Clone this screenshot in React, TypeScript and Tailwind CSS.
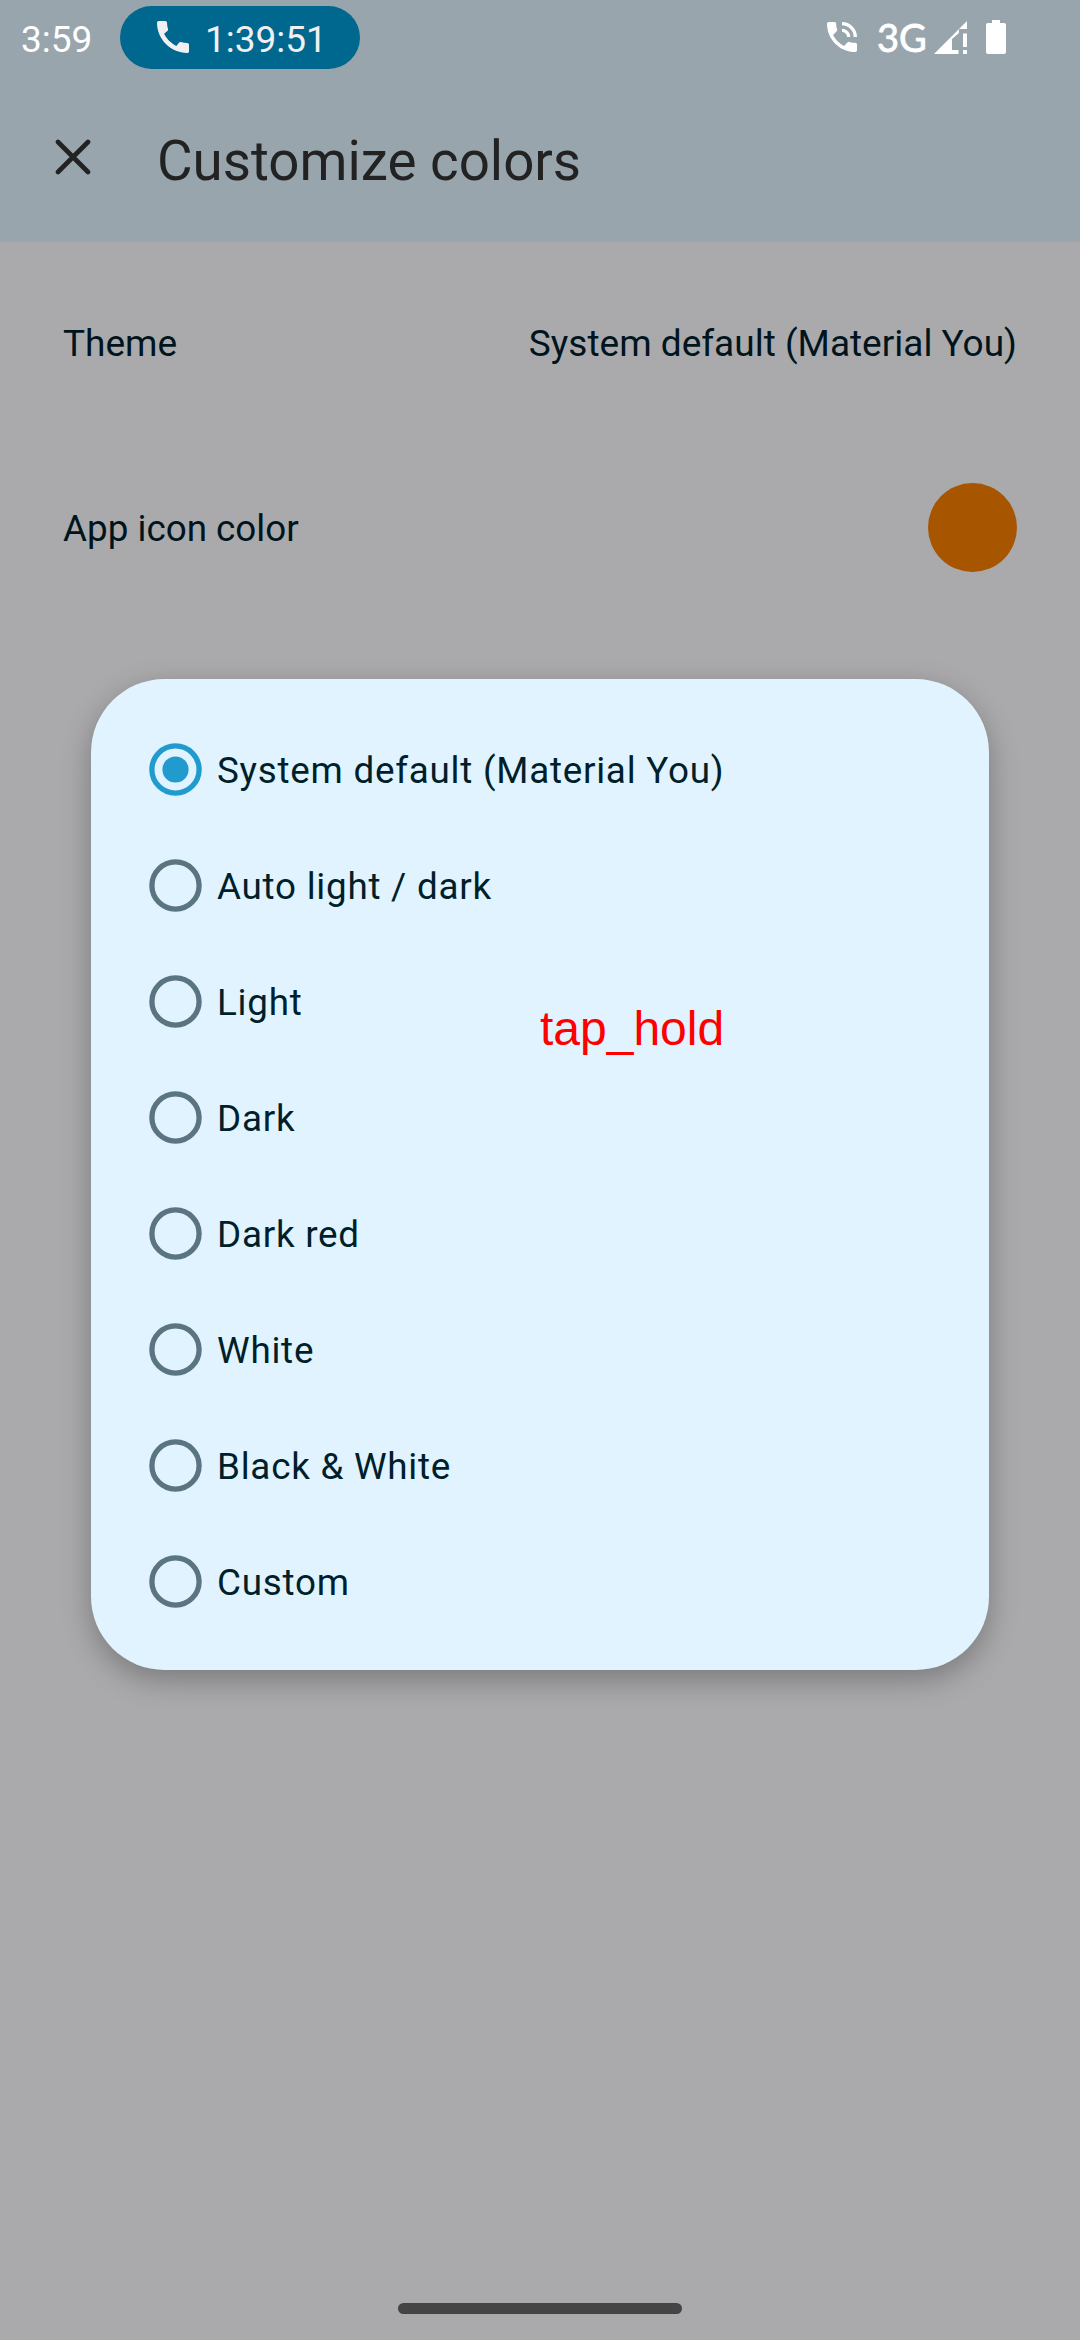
const options = [
  "System default (Material You)",
  "Auto light / dark",
  "Light",
  "Dark",
  "Dark red",
  "White",
  "Black & White",
  "Custom",
];

function PhoneIcon() {
  return (
    <svg viewBox="3 3 18 18" className="size-[32px] text-[#f0f0f3]" fill="currentColor">
      <path d="M20.01 15.38c-1.230 0-2.420-.2-3.530-.56a.98.98 0 0 0-1.010.24l-1.570 1.970c-2.830-1.350-5.480-3.900-6.890-6.830l1.950-1.660c.27-.28.35-.67.24-1.020-.37-1.110-.56-2.300-.56-3.530 0-.54-.45-.99-.99-.99H4.190C3.650 3 3 3.240 3 3.990 3 13.280 10.730 21 20.010 21c.71 0 .99-.63.99-1.180v-3.450c0-.54-.45-.99-.99-.99z" />
    </svg>
  );
}

function InCallIcon() {
  return (
    <svg viewBox="3 3 18 18" className="size-[30px]" fill="currentColor">
      <path d="M20 15.500c-1.250 0-2.450-.2-3.570-.57a1.020 1.020 0 0 0-1.020.24l-2.200 2.200a15.045 15.045 0 0 1-6.590-6.590l2.200-2.210a.96.96 0 0 0 .25-1A11.360 11.360 0 0 1 8.500 4c0-.55-.45-1-1-1H4c-.55 0-1 .45-1 1 0 9.390 7.610 17 17 17 .55 0 1-.45 1-1v-3.500c0-.55-.45-1-1-1zM19 12h2a9 9 0 0 0-9-9v2c3.870 0 7 3.130 7 7zm-4 0h2c0-2.760-2.240-5-5-5v2c1.660 0 3 1.340 3 3z" />
    </svg>
  );
}

function SignalIcon() {
  return (
    <svg viewBox="0 0 33 33" className="size-[33px]" fill="currentColor">
      <path d="M33 0V8H25V12L18 18V29H24.500V33H0zM29 12.500H33V26H29zM29 29H33V33H29z" />
    </svg>
  );
}

function BatteryIcon() {
  return (
    <svg viewBox="0 0 20 34" className="h-[34px] w-[20px]" fill="currentColor">
      <path d="M6 0h8v3h4a2 2 0 0 1 2 2v27a2 2 0 0 1-2 2H2a2 2 0 0 1-2-2V5a2 2 0 0 1 2-2h4z" />
    </svg>
  );
}

function Radio({ checked }: { checked: boolean }) {
  return (
    <svg viewBox="0 0 53 53" className={checked ? "size-[53px] text-[#219bce]" : "size-[53px] text-[#5a7481]"}>
      <circle cx="26.500" cy="26.500" r="23.600" fill="none" stroke="currentColor" strokeWidth="5.300" />
      {checked && <circle cx="26.500" cy="26.500" r="13.100" fill="currentColor" />}
    </svg>
  );
}

export default function App() {
  return (
    <div className="relative flex h-[2340px] w-[1080px] flex-col overflow-hidden bg-[#aaaaac] font-['Roboto',sans-serif] text-[37px] text-[#00141d]">
      <header className="h-[242px] bg-[#98a5ad]">
        <div className="flex h-[74px] items-center pl-[20px] text-white">
          <span className="w-[100px] pl-px pt-[5px]">3:59</span>
          <div className="flex h-[63px] w-[240px] items-center rounded-full bg-[#00678f] pl-[37px]">
            <PhoneIcon />
            <span className="ml-[16px] pt-[5px] text-[#f0f0f3]">1:39:51</span>
          </div>
          <div className="ml-[467px] flex items-center">
            <InCallIcon />
            <span className="ml-[19px] w-[58px] pl-px font-['Lato',sans-serif] text-[38px] [-webkit-text-stroke:0.800px_white]">3G</span>
            <SignalIcon />
            <span className="ml-[19px] flex"><BatteryIcon /></span>
          </div>
        </div>
        <div className="flex h-[168px] items-center pl-[55px] text-[#222222]">
          <svg viewBox="0 0 36 36" className="mb-[2px] size-[36px]" fill="none" stroke="currentColor" strokeWidth="4.600" strokeLinecap="round">
            <path d="M3 3 33 33M33 3 3 33" />
          </svg>
          <h1 className="ml-[66px] pt-[6px] text-[54.700px]">Customize colors</h1>
        </div>
      </header>
      <div className="flex h-[202px] items-center justify-between px-[63px] pt-px">
        <span>Theme</span>
        <span>System default (Material You)</span>
      </div>
      <div className="flex h-[166px] items-center justify-between px-[63px]">
        <span className="pt-[4px] text-[36.800px]">App icon color</span>
        <span className="size-[89px] rounded-full bg-[#a85500]" />
      </div>
      <section className="absolute left-[91px] top-[679px] h-[991px] w-[898px] rounded-[73.500px] bg-[#e0f3ff] pt-[32px] text-[#001f2a] shadow-[0_10px_30px_rgba(0,0,0,0.28)]">
        {options.map((label, i) => (
          <div key={label} className="flex h-[116px] items-center pl-[57.500px]">
            <Radio checked={i === 0} />
            <span className="ml-[15.500px] pt-[3px] text-[36.800px] tracking-[0.75px]">{label}</span>
          </div>
        ))}
      </section>
      <div className="absolute left-[540px] top-[1001px] font-['Liberation_Sans',sans-serif] text-[48px] leading-[55px] text-[#ff0000]">tap_hold</div>
      <div className="mx-auto mt-auto mb-[26px] h-[11px] w-[284px] rounded-full bg-[#444444]" />
    </div>
  );
}
